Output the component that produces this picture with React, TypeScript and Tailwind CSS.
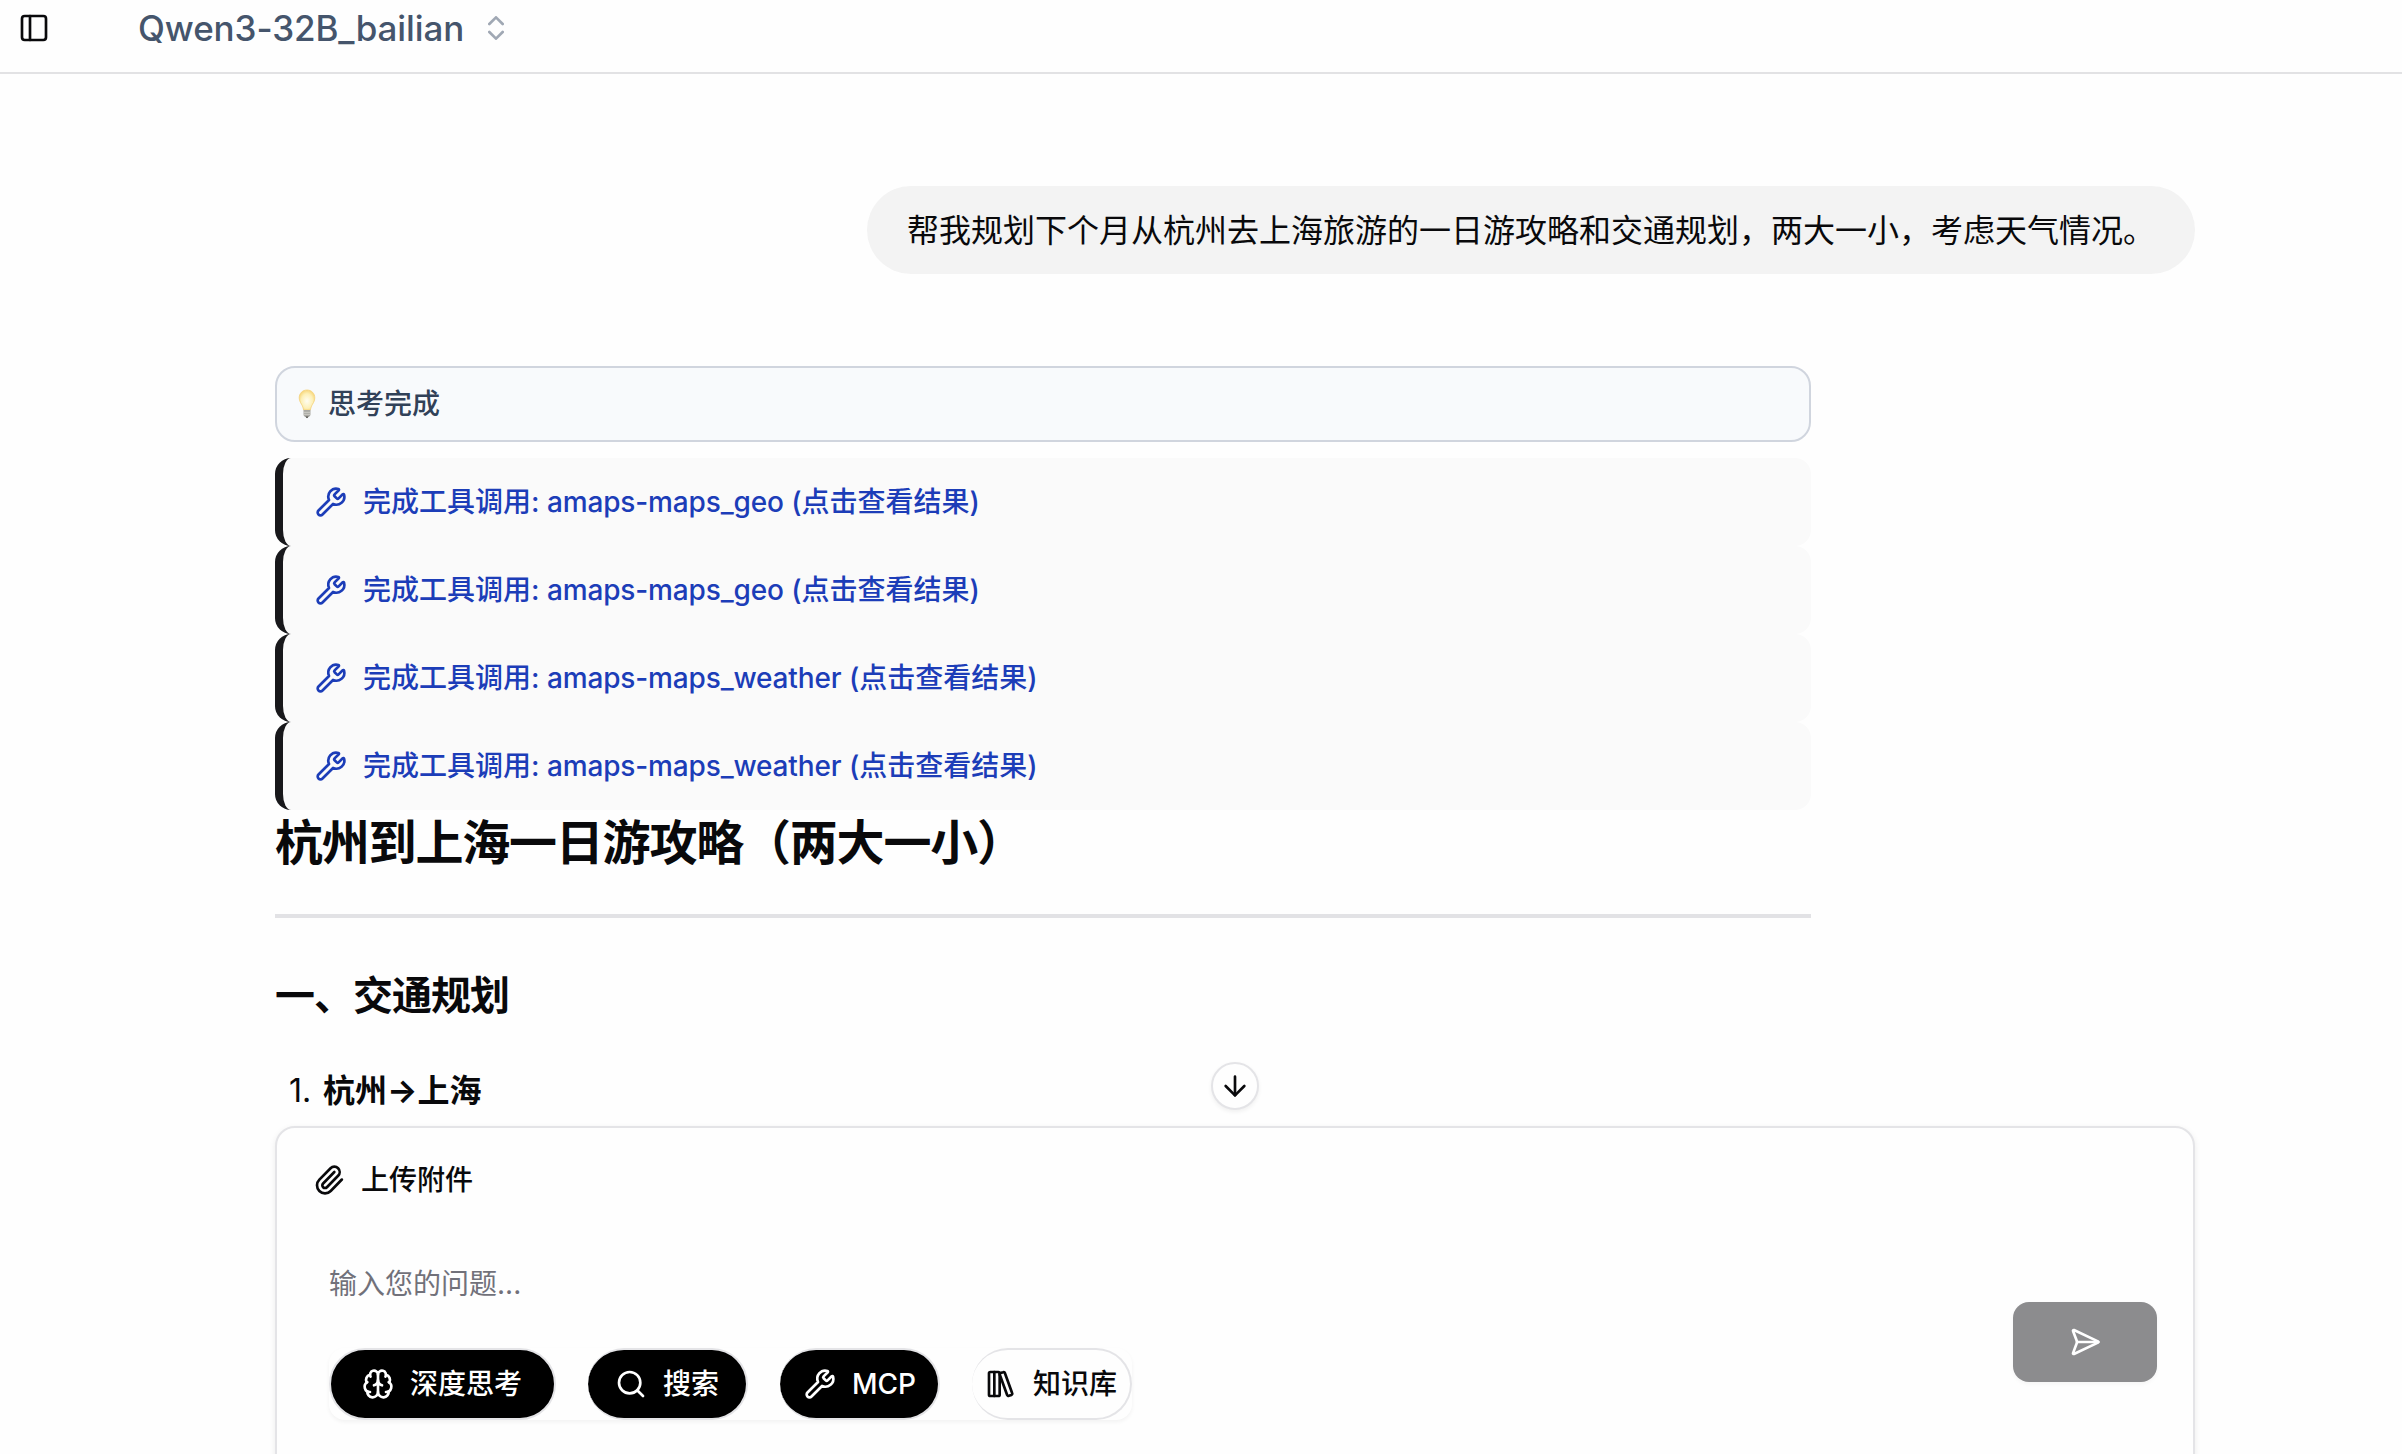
import React from 'react';
import {
    ArrowDown,
    Brain,
    ChevronsUpDown,
    LibraryBig,
    PanelLeft,
    Paperclip,
    Search,
    SendHorizontal,
    Wrench,
} from 'lucide-react';

const toolCalls = [
    'amaps-maps_geo',
    'amaps-maps_geo',
    'amaps-maps_weather',
    'amaps-maps_weather',
];

const Bulb = () => (
    <svg width="18" height="30" viewBox="0 0 18 30" fill="none">
        <defs>
            <radialGradient id="glass" cx="50%" cy="55%" r="60%">
                <stop offset="0" stopColor="#fffdf2" />
                <stop offset="0.6" stopColor="#fdf0b8" />
                <stop offset="1" stopColor="#f6d06c" />
            </radialGradient>
        </defs>
        <path
            d="M9 1C4.5 1 1.2 4.4 1.2 8.9c0 3.6 2.1 5.6 3.2 8 .7 1.5.9 3 1.2 4.1h6.8c.3-1.1.5-2.6 1.2-4.1 1.1-2.4 3.2-4.4 3.2-8C16.8 4.4 13.5 1 9 1Z"
            fill="url(#glass)"
            stroke="#f4d27c"
            strokeWidth="0.8"
        />
        <path d="M5.5 21h7v4.5c0 1-.8 2-1.8 2.2L9 29l-1.7-1.3c-1-.2-1.8-1.2-1.8-2.2V21Z" fill="#a9a8a3" />
        <path d="M5.5 23.3h7M5.5 25.3h7" stroke="#d6d5d0" strokeWidth="0.8" />
        <path d="M7.3 27.5h3.4L9 29.3Z" fill="#4a4844" />
    </svg>
);

const Header = () => (
    <header className="flex h-[74px] shrink-0 items-center border-b-2 border-[#e2e2e4] pb-4 pl-[18px]">
        <PanelLeft size={32} className="text-[#09090b]" />
        <button className="ml-[88px] flex items-center gap-4 text-slate-600">
            <span className="w-[326px] whitespace-nowrap text-left text-[35px] font-medium leading-[44px] tracking-[-0.1px]">
                Qwen3-32B_bailian
            </span>
            <ChevronsUpDown size={32} className="opacity-50" />
        </button>
    </header>
);

const ToolCall = ({ name }: { name: string }) => (
    <div className="flex h-[88px] items-center gap-4 rounded-[16px] border-l-8 border-[#18181b] bg-[#fafafa] pl-[32px] text-[28px] font-medium text-[#1c3db8]">
        <Wrench size={32} />
        <span className="whitespace-nowrap">
            完成工具调用: <span className="tracking-[-0.15px]">{name}</span> (点击查看结果)
        </span>
    </div>
);

const Composer = () => (
    <section className="flex h-[380px] w-full shrink-0 flex-col rounded-[20px] border-2 border-[#e4e4e7] bg-[#fefefe] shadow-[0_2px_6px_rgba(0,0,0,0.08)]">
        <button className="ml-[36px] mt-[32px] flex h-10 items-center gap-4 self-start text-[28px] font-medium">
            <Paperclip size={32} />
            上传附件
        </button>
        <div className="ml-[52px] mt-[64px] flex h-10 items-center text-[28px] text-[#71717a]">
            输入您的问题...
        </div>
        <div className="flex items-start justify-between pr-[36px]">
            <div className="ml-[52px] mt-[44px] flex h-[72px] gap-[32px] rounded-[16px] text-[28px] font-medium text-white shadow-[0_2px_4px_rgba(0,0,0,0.05)]">
                <button className="flex w-[227px] items-center gap-4 rounded-full border-2 border-[#e4e4e7] bg-black pl-[31px]">
                    <Brain size={32} />
                    深度思考
                </button>
                <button className="flex w-[160px] items-center gap-4 rounded-full border-2 border-l-0 border-[#e4e4e7] bg-black pl-[27px]">
                    <Search size={32} />
                    搜索
                </button>
                <button className="flex w-[160px] items-center gap-4 rounded-full border-2 border-l-0 border-[#e4e4e7] bg-black pl-[24px]">
                    <Wrench size={32} />
                    MCP
                </button>
                <button className="flex w-[160px] items-center gap-4 whitespace-nowrap rounded-full border-2 border-l-0 border-[#e4e4e7] bg-[#fefefe] pl-[13px] text-[#09090b]">
                    <LibraryBig size={32} className="shrink-0" />
                    知识库
                </button>
            </div>
            <button className="-mt-[2px] flex h-20 w-36 items-center justify-center rounded-[16px] bg-[#8c8c8e] text-white shadow-[0_2px_4px_rgba(0,0,0,0.04)]">
                <SendHorizontal size={32} />
            </button>
        </div>
    </section>
);

const App: React.FC = () => {
    return (
        <div className="flex h-[1454px] flex-col overflow-hidden bg-[#fefefe] font-['Inter','Noto_Sans_CJK_SC',sans-serif] text-[#09090b]">
            <Header />
            <main className="ml-[275px] flex w-[1920px] shrink-0 flex-col pt-[112px]">
                <div className="flex h-[88px] items-center self-end whitespace-nowrap rounded-full bg-[#f3f3f3] px-10 pt-[2px] text-[32px]">
                    帮我规划下个月从杭州去上海旅游的一日游攻略和交通规划，两大一小，考虑天气情况。
                </div>

                <article className="mt-[92px] flex h-[760px] w-[1536px] flex-col">
                    <div className="flex h-[76px] shrink-0 items-center rounded-[20px] border-2 border-[#d0d5de] bg-[#f8fafc] pl-[21px] text-[28px] font-medium text-slate-700">
                        <Bulb />
                        <span className="ml-[12px]">思考完成</span>
                    </div>
                    <div className="mt-4">
                        {toolCalls.map((name, i) => (
                            <ToolCall key={i} name={name} />
                        ))}
                    </div>
                    <h1 className="mt-[1px] h-[64px] whitespace-nowrap text-[48px] font-bold leading-[64px] tracking-tight">
                        杭州到上海一日游攻略（两大一小）
                    </h1>
                    <hr className="mt-[39px] border-t-4 border-[#e2e2e5]" />
                    <h2 className="mt-[50px] text-[40px] font-bold leading-[56px] tracking-tight">
                        一、交通规划
                    </h2>
                    <ol className="mt-[43px] text-[32px] leading-[48px]">
                        <li className="flex pl-[14px]">
                            <span className="w-[34px]">1.</span>
                            <strong className="font-bold">杭州→上海</strong>
                        </li>
                    </ol>
                </article>

                <div className="relative">
                    <button className="absolute -top-[64px] left-[936px] flex size-12 items-center justify-center rounded-full border-2 border-[#e4e4e7] bg-[#fefefe] shadow-[0_2px_4px_rgba(0,0,0,0.06)]">
                        <ArrowDown size={32} />
                    </button>
                    <Composer />
                </div>
            </main>
        </div>
    );
};

export default App;
